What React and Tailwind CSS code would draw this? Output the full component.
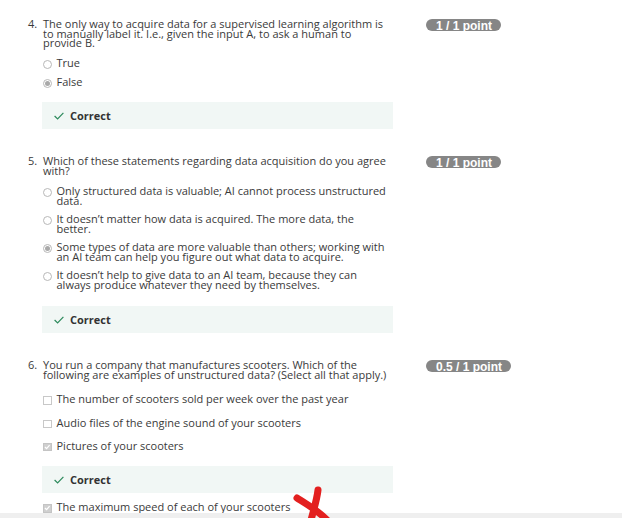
import React from "react";

const Radio = ({ checked }) => (
  <span className="mt-[1.5px] mr-[4.5px] flex h-[9px] w-[9px] shrink-0 items-center justify-center rounded-full border border-[#b8b8b8] bg-white">
    {checked && <span className="h-[5px] w-[5px] rounded-full bg-[#a9a9a9]" />}
  </span>
);

const Check = ({ checked }) => (
  <span
    className={
      "mt-[2px] mr-[5px] flex h-[8.5px] w-[8.5px] shrink-0 items-center justify-center border " +
      (checked ? "border-[#c4c4c4] bg-[#cfcfcf]" : "border-[#c8c8c8] bg-white")
    }
  >
    {checked && (
      <svg width="7" height="6" viewBox="0 0 7 6">
        <polyline points="1,3 2.8,4.8 6,1" fill="none" stroke="#ffffff" strokeWidth="1.3" />
      </svg>
    )}
  </span>
);

const Option = ({ type, checked, className, children }) => (
  <div className={"flex " + (className || "")}>
    {type === "radio" ? <Radio checked={checked} /> : <Check checked={checked} />}
    <div className="whitespace-nowrap">{children}</div>
  </div>
);

const Correct = ({ className }) => (
  <div
    className={
      "ml-[-1px] flex h-[27px] w-[351px] items-center bg-[#f1f7f5] pl-[12px] " + (className || "")
    }
  >
    <svg width="10" height="8" viewBox="0 0 10 8" className="mr-[6px] mt-[1px]">
      <polyline points="0.6,4 3.6,7 9.4,0.8" fill="none" stroke="#2c8a5c" strokeWidth="1.2" />
    </svg>
    <span className="font-bold leading-[27px] text-[#333333]">Correct</span>
  </div>
);

const Badge = ({ children, className }) => (
  <div
    className={
      "ml-[33px] h-[12px] shrink-0 self-start overflow-hidden rounded-full bg-[#868686] pl-[10px] pr-[9px] font-['Liberation_Sans',Arial,sans-serif] text-[12px] font-bold leading-[14.5px] text-white whitespace-nowrap " +
      (className || "")
    }
  >
    {children}
  </div>
);

const Question = ({ num, text, badge, badgeClass, className, children }) => (
  <div className={"flex " + (className || "")}>
    <div className="w-[365px] shrink-0">
      <div className="flex">
        <span className="w-[15px] shrink-0">{num}</span>
        <div className="whitespace-nowrap">{text}</div>
      </div>
      <div className="pl-[15px]">{children}</div>
    </div>
    <Badge className={badgeClass}>{badge}</Badge>
  </div>
);

export default function App() {
  return (
    <div className="relative h-[518px] w-[622px] overflow-hidden bg-white font-['Open_Sans',sans-serif] text-[11px] leading-[9.5px] text-[#3a3a3a]">
      <div className="h-[513px] overflow-hidden pl-[28px] pt-[19px]">
        <Question
          num="4."
          badge="1 / 1 point"
          text={
            <>
              The only way to acquire data for a supervised learning algorithm is
              <br />
              to manually label it. I.e., given the input A, to ask a human to
              <br />
              provide B.
            </>
          }
        >
          <Option type="radio" className="mt-[10.5px]">True</Option>
          <Option type="radio" checked className="mt-[8.5px]">False</Option>
          <Correct className="mt-[14.5px]" />
        </Question>

        <Question
          num="5."
          badge="1 / 1 point"
          className="mt-[27px]"
          text={
            <>
              Which of these statements regarding data acquisition do you agree
              <br />
              with?
            </>
          }
        >
          <Option type="radio" className="mt-[11px]">
            Only structured data is valuable; AI cannot process unstructured
            <br />
            data.
          </Option>
          <Option type="radio" className="mt-[9px]">
            It doesn’t matter how data is acquired. The more data, the
            <br />
            better.
          </Option>
          <Option type="radio" checked className="mt-[9px]">
            Some types of data are more valuable than others; working with
            <br />
            an AI team can help you figure out what data to acquire.
          </Option>
          <Option type="radio" className="mt-[9px]">
            It doesn’t help to give data to an AI team, because they can
            <br />
            always produce whatever they need by themselves.
          </Option>
          <Correct className="mt-[17px]" />
        </Question>

        <Question
          num="6."
          badge="0.5 / 1 point"
          badgeClass="mt-[0px]"
          className="mt-[27px]"
          text={
            <>
              You run a company that manufactures scooters. Which of the
              <br />
              following are examples of unstructured data? (Select all that apply.)
            </>
          }
        >
          <Option type="check" className="mt-[15px]">
            The number of scooters sold per week over the past year
          </Option>
          <Option type="check" className="mt-[13px]">
            Audio files of the engine sound of your scooters
          </Option>
          <Option type="check" checked className="mt-[12.5px]">
            Pictures of your scooters
          </Option>
          <Correct className="mt-[14.5px]" />
          <Option type="check" checked className="mt-[9.5px]">
            The maximum speed of each of your scooters
          </Option>
        </Question>
      </div>
      <div className="h-[5px] bg-[#efefef]" />

      <svg
        className="absolute left-[289px] top-[484px]"
        width="45"
        height="34"
        viewBox="0 0 45 34"
      >
        <path d="M29 6 C28 15 25 25 22 36" fill="none" stroke="#e3201f" strokeWidth="7" strokeLinecap="round" />
        <path d="M8 14 C16 19 27 25 38 36" fill="none" stroke="#e3201f" strokeWidth="7" strokeLinecap="round" />
      </svg>
    </div>
  );
}
